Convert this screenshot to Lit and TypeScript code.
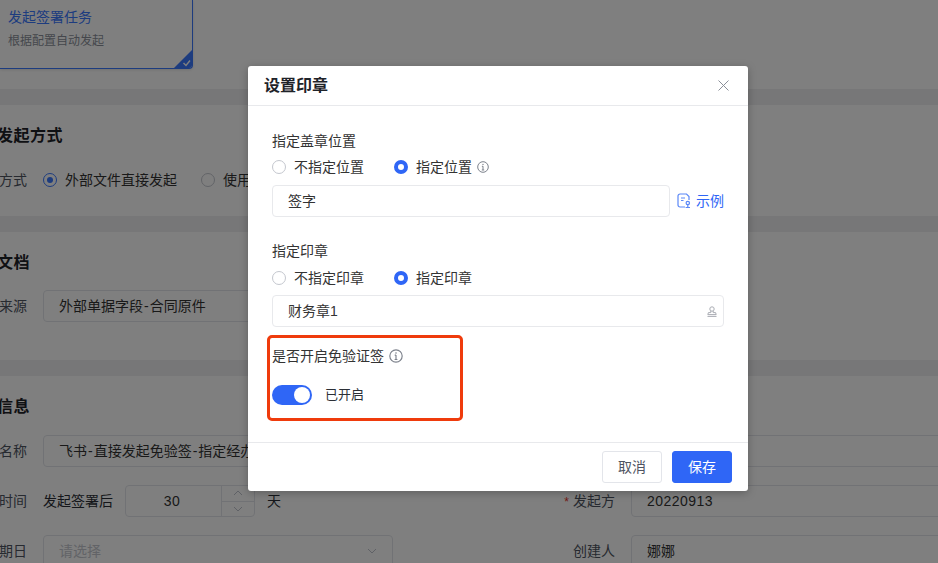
import { LitElement, html, css, svg } from "lit";
import { customElement } from "lit/decorators.js";

const info = (cls = "info") => html`<svg class=${cls} viewBox="0 0 12 12" fill="none" stroke="#7d828c" stroke-width="1"><circle cx="6" cy="6" r="5.3"/><path d="M6 5.2V9M4.9 5.3H6M4.8 9h2.4" /><circle cx="6" cy="3.4" r=".7" fill="#7d828c" stroke="none"/></svg>`;
const chevron = (up: boolean) => html`<svg width="10" height="6" viewBox="0 0 10 6" fill="none" stroke="#bfc3cc" stroke-width="1">${up ? svg`<path d="M1 5l4-4 4 4"/>` : svg`<path d="M1 1l4 4 4-4"/>`}</svg>`;

@customElement("app-root")
export class AppRoot extends LitElement {
  static styles = css`
    :host {
      display: block;
      font-family: "Liberation Sans", "Noto Sans CJK SC", sans-serif;
      font-size: 14px;
      line-height: 22px;
      color: #2b2f36;
    }
    * { box-sizing: border-box; }
    .page {
      position: relative;
      width: 938px;
      height: 563px;
      overflow: hidden;
      background: #eeeff1;
      display: flex;
      flex-direction: column;
      gap: 16px;
    }
    .section { background: #fff; flex: none; white-space: nowrap; }
    .s1 { height: 89px; }
    .s2 { height: 111px; }
    .s3 { height: 128px; }
    .s4 { flex: 1; }
    .card {
      position: relative;
      width: 193px;
      height: 69px;
      border: 1px solid #3a78ff;
      border-top: none;
      border-left: none;
      border-radius: 0 0 4px 0;
      padding: 6px 0 0 8px;
      overflow: hidden;
      box-shadow: 0 1px 3px rgba(0, 0, 0, .12);
    }
    .card-title { color: #3a78ff; }
    .card-sub { color: #8a8f99; font-size: 12px; line-height: 18px; margin-top: 4px; }
    .corner { position: absolute; right: -1px; bottom: -1px; display: block; }
    .sec-title {
      font-size: 16px;
      font-weight: 600;
      letter-spacing: .5px;
      line-height: 24px;
      padding-top: 19px;
      margin-left: -3px;
      color: #1f2329;
    }
    .rows { display: flex; flex-direction: column; gap: 18px; margin-left: -37px; }
    .s2 .rows { margin-top: 21px; }
    .s3 .rows { margin-top: 15px; }
    .s4 .rows { margin-top: 16px; }
    .row { display: flex; gap: 158px; }
    .field { display: flex; gap: 16px; align-items: center; width: 430px; flex: none; }
    .lab { width: 64px; text-align: right; flex: none; color: #4e5461; }
    .req { color: #e5352b; margin-right: 4px; font-size: 12px; }
    .ctl {
      width: 350px;
      height: 32px;
      flex: none;
      border: 1px solid #e3e5ea;
      border-radius: 4px;
      padding: 0 15px;
      display: flex;
      align-items: center;
      color: #333;
    }
    .ctl.ph { color: #c4c7ce; justify-content: space-between; }
    .hy { margin: 0 1px; }
    .num { letter-spacing: .45px; }
    .inline { display: flex; align-items: center; gap: 12px; flex: none; width: 350px; }
    .stepper {
      width: 130px;
      height: 32px;
      border: 1px solid #e3e5ea;
      border-radius: 4px;
      display: flex;
      flex: none;
    }
    .step-val { width: 95px; padding-right: 3px; text-align: center; line-height: 30px; color: #333; }
    .step-btns {
      flex: 1;
      display: flex;
      flex-direction: column;
      border-left: 1px solid #e3e5ea;
    }
    .step-btns span { flex: 1; display: flex; align-items: center; justify-content: center; }
    .step-btns span + span { border-top: 1px solid #e3e5ea; }
    .radios { display: flex; align-items: center; gap: 24px; }
    .radio { display: flex; align-items: center; gap: 8px; color: #333; }
    .dot {
      width: 14px;
      height: 14px;
      border-radius: 50%;
      border: 1px solid #c4c7ce;
      background: #fff;
      flex: none;
    }
    .dot.on { border: 4px solid #2f66f6; }
    .dot.ring { border: 1px solid #3a78ff; padding: 3px; }
    .dot.ring::after { content: ""; display: block; width: 6px; height: 6px; border-radius: 50%; background: #3a78ff; }
    .info { width: 12px; height: 12px; flex: none; }
    .info.lg { width: 14px; height: 14px; }

    .overlay { position: absolute; inset: 0; background: rgba(0, 0, 0, .5); }
    .modal {
      position: absolute;
      left: 248px;
      top: 66px;
      width: 500px;
      height: 425px;
      background: #fff;
      border-radius: 3px;
      box-shadow: 0 2px 8px rgba(0, 0, 0, .25);
      display: flex;
      flex-direction: column;
      white-space: nowrap;
    }
    .m-head {
      height: 40px;
      flex: none;
      border-bottom: 1px solid #e8e9ec;
      padding: 0 19px 0 16px;
      display: flex;
      align-items: center;
      justify-content: space-between;
    }
    .m-title { font-size: 16px; font-weight: 600; color: #1f2329; }
    .m-body { flex: 1; padding: 24px 24px 0; display: flex; flex-direction: column; }
    .m-lab { color: #333; }
    .m-radios { margin-top: 4px; }
    .m-radios .radios { gap: 30px; }
    .with-info { display: flex; align-items: center; gap: 5px; }
    .m-input {
      height: 32px;
      border: 1px solid #e8e9ec;
      border-radius: 4px;
      padding: 0 15px;
      display: flex;
      align-items: center;
      justify-content: space-between;
      color: #333;
    }
    .stamp-ic { margin-right: -9px; }
    .input-row { display: flex; align-items: center; gap: 7px; margin-top: 7px; }
    .input-row .m-input { flex: 1; }
    .example { display: flex; align-items: center; gap: 5px; color: #2f66f6; }
    .g2 { margin-top: 23px; }
    .g2 .m-input { margin-top: 6px; }
    .g2 .m-radios { margin-top: 5px; }
    .g3 { position: relative; margin-top: 18px; }
    .switch-row { display: flex; align-items: center; gap: 13px; margin-top: 18px; height: 20px; font-size: 13px; }
    .switch {
      width: 40px;
      height: 20px;
      border-radius: 10px;
      background: #2f66f6;
      padding: 2px 2px 2px 22px;
    }
    .switch::after { content: ""; display: block; width: 16px; height: 16px; border-radius: 50%; background: #fff; }
    .mark {
      position: absolute;
      left: -5px;
      top: -10px;
      width: 196px;
      height: 86px;
      border: 3px solid #ef3b0c;
      border-radius: 5px;
      pointer-events: none;
    }
    .m-foot {
      height: 49px;
      flex: none;
      border-top: 1px solid #e8e9ec;
      padding: 0 16px;
      display: flex;
      align-items: center;
      justify-content: flex-end;
      gap: 10px;
    }
    .btn {
      width: 60px;
      height: 32px;
      border-radius: 3px;
      border: 1px solid #e3e5ea;
      background: #fff;
      color: #4e5461;
      font: inherit;
      padding: 0;
    }
    .btn.primary { background: #2f66f6; border-color: #2f66f6; color: #fff; }
  `;

  render() {
    return html`
      <div class="page">
        <div class="section s1">
          <div class="card">
            <div class="card-title">发起签署任务</div>
            <div class="card-sub">根据配置自动发起</div>
            <svg class="corner" width="20" height="20" viewBox="0 0 20 20">
              <path d="M20 0V20H0Z" fill="#3a78ff" />
              <path d="M10.5 14l2.5 2.5 4-5" fill="none" stroke="#fff" stroke-width="1.4" />
            </svg>
          </div>
        </div>
        <div class="section s2">
          <div class="sec-title">发起方式</div>
          <div class="rows">
            <div class="row">
              <div class="field">
                <span class="lab">方式</span>
                <div class="radios">
                  <span class="radio"><span class="dot ring"></span>外部文件直接发起</span>
                  <span class="radio"><span class="dot"></span>使用模板发起</span>
                </div>
              </div>
            </div>
          </div>
        </div>
        <div class="section s3">
          <div class="sec-title">文档</div>
          <div class="rows">
            <div class="row">
              <div class="field"><span class="lab">来源</span><div class="ctl"><span>外部单据字段<span class="hy">-</span>合同原件</span></div></div>
            </div>
          </div>
        </div>
        <div class="section s4">
          <div class="sec-title">信息</div>
          <div class="rows">
            <div class="row">
              <div class="field"><span class="lab">名称</span><div class="ctl"><span>飞书<span class="hy">-</span>直接发起免验签<span class="hy">-</span>指定经办人</span></div></div>
              <div class="field"><span class="lab"></span><div class="ctl"></div></div>
            </div>
            <div class="row">
              <div class="field">
                <span class="lab">时间</span>
                <div class="inline">
                  <span>发起签署后</span>
                  <div class="stepper">
                    <div class="step-val num">30</div>
                    <div class="step-btns"><span>${chevron(true)}</span><span>${chevron(false)}</span></div>
                  </div>
                  <span>天</span>
                </div>
              </div>
              <div class="field"><span class="lab"><span class="req">*</span>发起方</span><div class="ctl num">20220913</div></div>
            </div>
            <div class="row">
              <div class="field"><span class="lab">期日</span><div class="ctl ph">请选择${chevron(false)}</div></div>
              <div class="field"><span class="lab">创建人</span><div class="ctl">娜娜</div></div>
            </div>
          </div>
        </div>

        <div class="overlay"></div>

        <div class="modal">
          <div class="m-head">
            <span class="m-title">设置印章</span>
            <svg width="11" height="11" viewBox="0 0 11 11" fill="none" stroke="#8a8f99" stroke-width="1"><path d="M.5.5l10 10M10.500.5l-10 10" /></svg>
          </div>
          <div class="m-body">
            <div class="m-lab">指定盖章位置</div>
            <div class="m-radios">
              <div class="radios">
                <span class="radio"><span class="dot"></span>不指定位置</span>
                <span class="with-info"><span class="radio"><span class="dot on"></span>指定位置</span>${info()}</span>
              </div>
            </div>
            <div class="input-row">
              <div class="m-input">签字</div>
              <span class="example">
                <svg width="14" height="16" viewBox="0 0 14 16" fill="none" stroke="#5b88f7" stroke-width="1.2">
                  <path d="M8 14H3a2 2 0 0 1-2-2V3a2 2 0 0 1 2-2h6.500L12 3.500V7" />
                  <path d="M4 5h4M4 7.500h2.500" />
                  <circle cx="10.800" cy="10" r="1.700" />
                  <path d="M8.600 14.500h4.400M10.800 11.800v2.700" />
                </svg>
                示例
              </span>
            </div>
            <div class="g2">
              <div class="m-lab">指定印章</div>
              <div class="m-radios">
                <div class="radios">
                  <span class="radio"><span class="dot"></span>不指定印章</span>
                  <span class="radio"><span class="dot on"></span>指定印章</span>
                </div>
              </div>
              <div class="m-input">
                <span>财务章1</span>
                <svg class="stamp-ic" width="10" height="11" viewBox="0 0 10 11" fill="none" stroke="#a9acb3" stroke-width="1">
                  <circle cx="5" cy="3" r="2.200" />
                  <path d="M3.800 5v1.600H1.400L.8 8.600h8.400l-.6-2H6.200V5M.5 10.400h9" />
                </svg>
              </div>
            </div>
            <div class="g3">
              <div class="with-info m-lab">是否开启免验证签 ${info("info lg")}</div>
              <div class="switch-row"><span class="switch"></span><span>已开启</span></div>
              <div class="mark"></div>
            </div>
          </div>
          <div class="m-foot">
            <button class="btn">取消</button>
            <button class="btn primary">保存</button>
          </div>
        </div>
      </div>
    `;
  }
}
